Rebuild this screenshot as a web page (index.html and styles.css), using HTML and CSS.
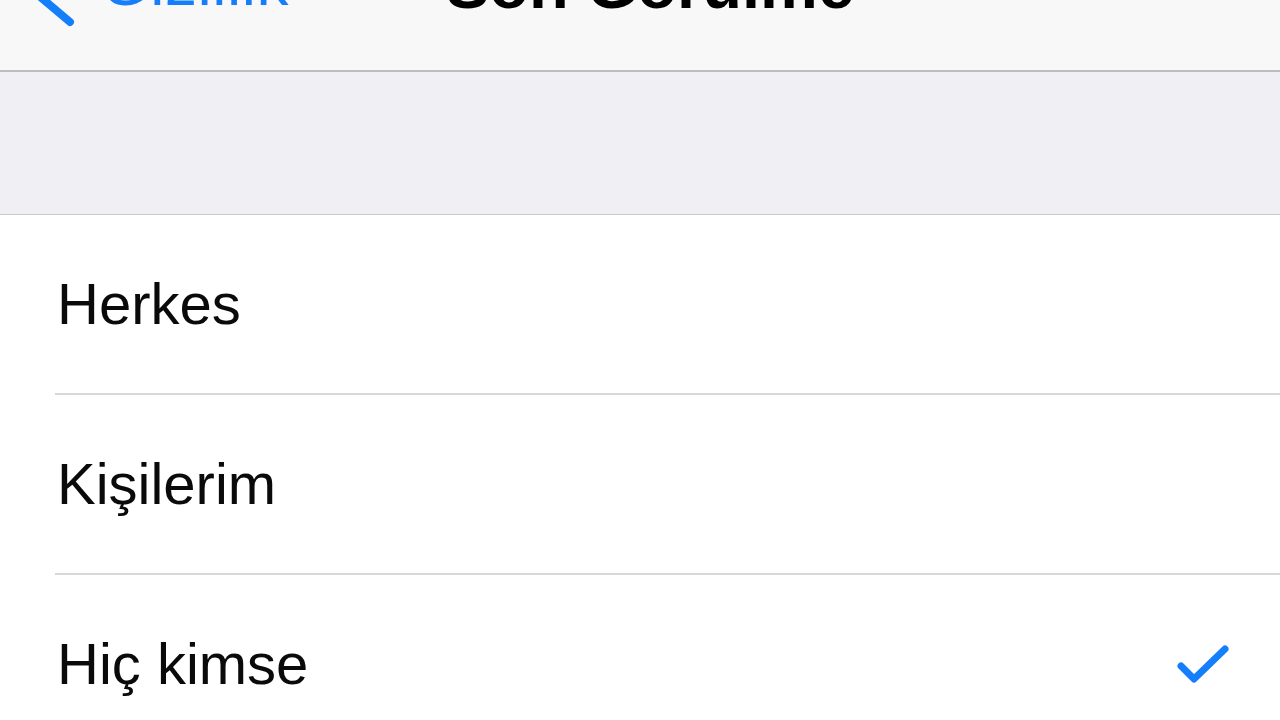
FILE: index.html
```html
<!DOCTYPE html>
<html lang="tr">
<head>
    <meta charset="UTF-8">
    <meta name="viewport" content="width=device-width, initial-scale=1.0">
    <title>Son Görülme</title>
    <link rel="stylesheet" href="styles.css">
</head>
<body>
    <header class="navbar">
        <div class="nav-row">
            <a class="back" href="#">
                <svg class="chevron" width="56" height="84" viewBox="0 0 56 84">
                    <path d="M50 3 L5 40 L50 78" fill="none" stroke="#157efb" stroke-width="8" stroke-linecap="round" stroke-linejoin="round"/>
                </svg>
                <span>Gizlilik</span>
            </a>
            <h1 class="title">Son Görülme</h1>
            <div></div>
        </div>
    </header>

    <div class="group-gap"></div>

    <ul class="options">
        <li class="option">
            <div class="option-inner"><span>Herkes</span></div>
        </li>
        <li class="option">
            <div class="option-inner"><span>Kişilerim</span></div>
        </li>
        <li class="option">
            <div class="option-inner">
                <span>Hiç kimse</span>
                <svg class="check" width="60" height="44" viewBox="0 0 60 44">
                    <path d="M9 24 L22 37 L53 7" fill="none" stroke="#157efb" stroke-width="7" stroke-linecap="round" stroke-linejoin="round"/>
                </svg>
            </div>
        </li>
    </ul>
</body>
</html>
```

FILE: styles.css
```css
body {
    font-family: "Liberation Sans", Arial, sans-serif;
    background-color: #fff;
    color: #0a0a0a;
    margin: 0;
    padding: 0;
    overflow: hidden;
}

.navbar {
    height: 70px;
    background-color: #f8f8f8;
    border-bottom: 2px solid #bdbdc1;
    overflow: hidden;
}

.nav-row {
    display: grid;
    grid-template-columns: 1fr auto 1fr;
    align-items: start;
    margin-top: -46px;
    padding-left: 20px;
}

.back {
    display: flex;
    align-items: flex-start;
    gap: 24px;
    color: #157efb;
    text-decoration: none;
    font-size: 64px;
    line-height: 58px;
    letter-spacing: 0.5px;
}

.chevron {
    display: block;
    margin-top: -10px;
}

.title {
    margin: 0;
    font-size: 65px;
    line-height: 64px;
    font-weight: bold;
    color: #000;
}

.group-gap {
    height: 142px;
    background-color: #efeff4;
    border-bottom: 1px solid #c8c7cc;
}

.options {
    list-style: none;
    margin: 0;
    padding: 0;
}

.option {
    padding-left: 55px;
}

.option-inner {
    height: 178px;
    display: flex;
    align-items: center;
    justify-content: space-between;
    border-bottom: 2px solid #d8d8dc;
    padding-left: 2px;
    padding-right: 48px;
    font-size: 58px;
    line-height: 58px;
}

.check {
    display: block;
}
```
